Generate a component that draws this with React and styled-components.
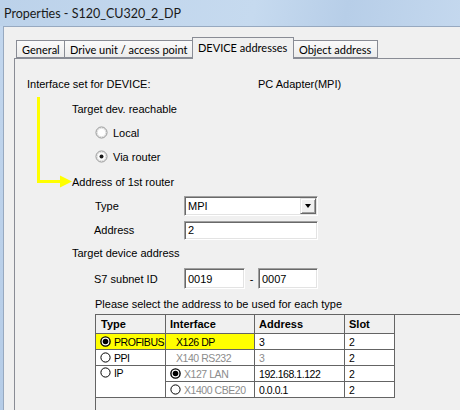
import React from "react";
import styled, { createGlobalStyle } from "styled-components";

const GlobalStyle = createGlobalStyle`
  html, body {
    margin: 0;
    padding: 0;
    background: #f0f0f0;
  }
  body {
    font-family: "Liberation Sans", Arial, sans-serif;
    font-size: 11px;
    color: #000;
  }
`;

const Window = styled.div`
  position: relative;
  width: 460px;
  height: 410px;
  overflow: hidden;
  background: linear-gradient(180deg, #c3d7ee 0%, #b5cce7 100%);
`;

const TitleBar = styled.div`
  height: 26px;
  display: flex;
  align-items: center;
  padding-left: 4px;
  font-family: Lato, "Open Sans", sans-serif;
  font-size: 12.5px;
  color: #1a1a1a;
  background: linear-gradient(100deg, #bcd2ea 0%, #c6daef 55%, #b7cee8 75%, #c4d8ee 100%);
`;

const Client = styled.div`
  margin-left: 3px;
  height: 383px;
  border-top: 1px solid #97a9c0;
  border-left: 1px solid #97a9c0;
  background: #f0f0f0;
`;

const TabStrip = styled.div`
  display: flex;
  align-items: flex-end;
  height: 31px;
  padding-left: 12px;
  font-family: Lato, "Open Sans", sans-serif;
  font-size: 11px;
`;

const Tab = styled.div`
  position: relative;
  z-index: ${(p) => (p.$active ? 2 : 1)};
  box-sizing: border-box;
  width: ${(p) => p.$w}px;
  height: ${(p) => (p.$active ? 22 : 18)}px;
  margin-bottom: ${(p) => (p.$active ? -1 : 0)}px;
  margin-left: ${(p) => (p.$first ? 0 : -1)}px;
  padding-left: 5px;
  padding-bottom: ${(p) => (p.$active ? 3 : 0)}px;
  display: flex;
  align-items: center;
  white-space: nowrap;
  overflow: hidden;
  border: 1px solid #898c95;
  border-bottom: ${(p) => (p.$active ? "none" : "1px solid #898c95")};
  background: ${(p) =>
    p.$active ? "#f0f0f0" : "linear-gradient(180deg, #fafafa 0%, #ececec 100%)"};
  color: #000;
`;

const Panel = styled.div`
  margin-left: 10px;
  width: 460px;
  height: 400px;
  border: 1px solid #898c95;
  background: #f0f0f0;
  padding-top: 13px;
  display: flex;
  flex-direction: column;
`;

const Row = styled.div`
  display: flex;
  align-items: center;
  height: ${(p) => p.$h}px;
  padding-left: ${(p) => p.$indent}px;
  white-space: nowrap;
`;

const Label = styled.span`
  display: inline-block;
  width: ${(p) => (p.$w ? `${p.$w}px` : "auto")};
  flex: none;
`;

const RadioLabel = styled.span`
  margin-left: 5px;
`;

const Select = styled.div`
  box-sizing: border-box;
  width: 134px;
  height: 20px;
  display: flex;
  align-items: center;
  padding: 0 0 0 3px;
  background: #fff;
  border-top: 1px solid #a0a0a0;
  border-left: 1px solid #a0a0a0;
  border-right: 1px solid #fff;
  border-bottom: 1px solid #fff;
  box-shadow: inset 1px 1px 0 #696969, inset -1px -1px 0 #e3e3e3;
`;

const DropButton = styled.div`
  box-sizing: border-box;
  margin-left: auto;
  margin-right: 1px;
  width: 16px;
  height: 16px;
  display: flex;
  align-items: center;
  justify-content: center;
  background: #f0f0f0;
  border-top: 1px solid #e3e3e3;
  border-left: 1px solid #e3e3e3;
  border-right: 1px solid #696969;
  border-bottom: 1px solid #696969;
  box-shadow: inset 1px 1px 0 #fff, inset -1px -1px 0 #a0a0a0;

  &::after {
    content: "";
    width: 0;
    height: 0;
    border-left: 3.5px solid transparent;
    border-right: 3.5px solid transparent;
    border-top: 4px solid #000;
  }
`;

const Input = styled.div`
  box-sizing: border-box;
  width: ${(p) => p.$w}px;
  height: ${(p) => p.$h}px;
  display: flex;
  align-items: center;
  padding-left: 3px;
  background: #fff;
  border-top: 1px solid #a0a0a0;
  border-left: 1px solid #a0a0a0;
  border-right: 1px solid #fff;
  border-bottom: 1px solid #fff;
  box-shadow: inset 1px 1px 0 #696969, inset -1px -1px 0 #e3e3e3;
`;

const Dash = styled.span`
  width: 13px;
  text-align: center;
`;

const GridBox = styled.div`
  margin-left: 80px;
  flex: 1;
  border-top: 1px solid #646464;
  border-left: 1px solid #646464;
  background: #f0f0f0;
`;

const Grid = styled.div`
  display: grid;
  grid-template-columns: 70px 89px 90px 50px;
  grid-template-rows: 19px repeat(4, 16px);
`;

const Cell = styled.div`
  box-sizing: border-box;
  display: flex;
  align-items: ${(p) => (p.$top ? "flex-start" : "center")};
  padding-left: ${(p) => p.$pad ?? 4}px;
  padding-top: ${(p) => (p.$top ? 1 : 0)}px;
  grid-row: ${(p) => (p.$span ? `span ${p.$span}` : "auto")};
  border-right: 1px solid #646464;
  border-bottom: 1px solid #646464;
  background: ${(p) => p.$bg || "#fff"};
  color: ${(p) => (p.$muted ? "#8c8c8c" : "#000")};
  font-weight: ${(p) => (p.$head ? "bold" : "normal")};
  font-size: ${(p) => (p.$head ? "11px" : "10.5px")};
  letter-spacing: ${(p) => (p.$head ? "0" : "-0.45px")};
  white-space: nowrap;
  overflow: hidden;
`;

const CellRadio = styled.span`
  display: inline-flex;
  margin-right: 3px;
`;

const Annotation = styled.svg`
  position: absolute;
  left: 0;
  top: 0;
  pointer-events: none;
`;

function DialogRadio({ checked }) {
  return (
    <svg width="13" height="13" viewBox="0 0 13 13">
      <circle cx="6.5" cy="6.5" r="5.5" fill="#fff" stroke="#8e8f8f" />
      <circle cx="6.5" cy="6.5" r="4.3" fill="none" stroke="#dcdcdc" />
      {checked && <circle cx="6.5" cy="6.5" r="2" fill="#1a1a1a" />}
    </svg>
  );
}

function GridRadio({ checked }) {
  return (
    <CellRadio>
      <svg width="11" height="11" viewBox="0 0 11 11">
        <circle
          cx="5.5"
          cy="5.5"
          r="4.6"
          fill="#fff"
          stroke="#000"
          strokeWidth={checked ? 1.4 : 1}
        />
        {checked && <circle cx="5.5" cy="5.5" r="2.8" fill="#000" />}
      </svg>
    </CellRadio>
  );
}

const tabs = [
  { label: "General", w: 49 },
  { label: "Drive unit / access point", w: 129 },
  { label: "DEVICE addresses", w: 102, active: true },
  { label: "Object address", w: 85 },
];

export default function App() {
  return (
    <>
      <GlobalStyle />
      <Window>
        <TitleBar>Properties - S120_CU320_2_DP</TitleBar>
        <Client>
          <TabStrip>
            {tabs.map((t, i) => (
              <Tab key={t.label} $w={t.w} $active={t.active} $first={i === 0}>
                {t.label}
              </Tab>
            ))}
          </TabStrip>
          <Panel>
            <Row $h={24} $indent={12}>
              <Label $w={231}>Interface set for DEVICE:</Label>
              <Label>PC Adapter(MPI)</Label>
            </Row>
            <Row $h={25} $indent={57}>
              Target dev. reachable
            </Row>
            <Row $h={23} $indent={80}>
              <DialogRadio />
              <RadioLabel>Local</RadioLabel>
            </Row>
            <Row $h={25} $indent={80}>
              <DialogRadio checked />
              <RadioLabel>Via router</RadioLabel>
            </Row>
            <Row $h={25} $indent={57}>
              Address of 1st router
            </Row>
            <Row $h={24} $indent={80}>
              <Label $w={89}>Type</Label>
              <Select>
                MPI
                <DropButton />
              </Select>
            </Row>
            <Row $h={24} $indent={79}>
              <Label $w={90}>Address</Label>
              <Input $w={134} $h={19}>
                2
              </Input>
            </Row>
            <Row $h={22} $indent={57}>
              Target device address
            </Row>
            <Row $h={29} $indent={79}>
              <Label $w={90}>S7 subnet ID</Label>
              <Input $w={61} $h={21}>
                0019
              </Input>
              <Dash>-</Dash>
              <Input $w={60} $h={21}>
                0007
              </Input>
            </Row>
            <Row $h={21} $indent={80}>
              Please select the address to be used for each type
            </Row>
            <GridBox>
              <Grid>
                <Cell $head $bg="#f0f0f0" $pad={5}>Type</Cell>
                <Cell $head $bg="#f0f0f0">Interface</Cell>
                <Cell $head $bg="#f0f0f0">Address</Cell>
                <Cell $head $bg="#f0f0f0">Slot</Cell>

                <Cell $bg="#ffff00">
                  <GridRadio checked />
                  PROFIBUS
                </Cell>
                <Cell $bg="#ffff00" $pad={10}>X126 DP</Cell>
                <Cell>3</Cell>
                <Cell>2</Cell>

                <Cell>
                  <GridRadio />
                  PPI
                </Cell>
                <Cell $muted $pad={10}>X140 RS232</Cell>
                <Cell $muted>3</Cell>
                <Cell>2</Cell>

                <Cell $span={2} $top>
                  <GridRadio />
                  IP
                </Cell>
                <Cell $muted>
                  <GridRadio checked />
                  X127 LAN
                </Cell>
                <Cell>192.168.1.122</Cell>
                <Cell>2</Cell>

                <Cell $muted>
                  <GridRadio />
                  X1400 CBE20
                </Cell>
                <Cell>0.0.0.1</Cell>
                <Cell>2</Cell>
              </Grid>
            </GridBox>
          </Panel>
        </Client>
        <Annotation width="80" height="195" viewBox="0 0 80 195">
          <path d="M38.5 97 V181.5 H62" stroke="#ffff00" strokeWidth="3" fill="none" />
          <polygon points="60,175.5 72,181.5 60,187.5" fill="#ffff00" />
        </Annotation>
      </Window>
    </>
  );
}
